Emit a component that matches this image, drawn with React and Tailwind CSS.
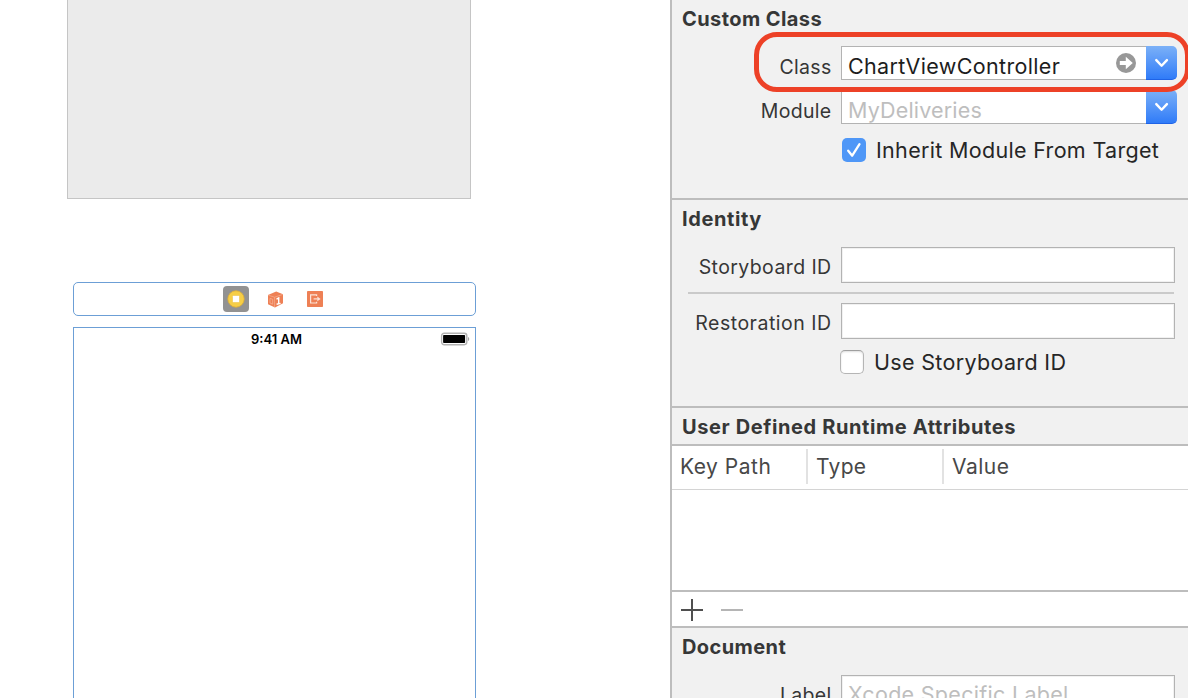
import React from "react";

function Heading({ children, className = "tracking-[0.42px]" }) {
  return (
    <h2 className={`h-[36px] whitespace-nowrap pl-[10px] text-[20px] font-bold leading-[38px] text-[#363737] ${className}`}>
      {children}
    </h2>
  );
}

function Label({ children, className = "" }) {
  return (
    <span className={`w-[159.5px] shrink-0 whitespace-nowrap text-right text-[19.5px] text-[#363636] ${className}`}>
      {children}
    </span>
  );
}

function ComboButton() {
  return (
    <div className="flex h-[34px] w-[31px] shrink-0 items-center justify-center rounded-r-[5px] border-b border-[#1f63e6] bg-gradient-to-b from-[#7bb0f7] to-[#2f7bf8]">
      <svg width="14" height="10" viewBox="0 0 14 10" fill="none" stroke="#fff" strokeWidth="2.4" strokeLinecap="round" strokeLinejoin="round">
        <path d="M1.3 2.1 6.6 7.7l5.3-5.6" />
      </svg>
    </div>
  );
}

function TextField() {
  return <div className="ml-[9.5px] h-[36px] w-[334px] border border-[#b3b3b3] bg-white shadow-[inset_0_0_0_1px_#f1f1f1]" />;
}

function Canvas() {
  return (
    <div className="flex w-[670px] shrink-0 flex-col">
      <div className="ml-[67px] h-[198.5px] w-[404px] border border-t-0 border-[#c5c5c5] bg-[#ebebeb]" />
      <div className="ml-[73px] mt-[83.5px] flex h-[34px] w-[403px] items-center rounded-[5px] border border-[#6c9fd6] pl-[149px]">
        <div className="flex h-[26px] w-[26px] items-center justify-center rounded-[4px] bg-[#929292]">
          <svg width="18" height="18" viewBox="0 0 18 18">
            <circle cx="9" cy="9" r="8.2" fill="#f6ce46" stroke="#dfae35" strokeWidth="0.8" />
            <rect x="5.5" y="5.5" width="7" height="7" rx="0.8" fill="#fff" stroke="#e9bd3c" strokeWidth="0.5" />
          </svg>
        </div>
        <svg className="ml-[18px]" width="17" height="17" viewBox="0 0 17 17">
          <path d="M9.2 0.4 16 3.2v9L8 16.6 1 13.2V4Z" fill="#ee8055" />
          <path d="M1.2 4.2 7.6 6.2 15.8 3.4M7.6 6.2v10" fill="none" stroke="#f6b093" strokeWidth="0.7" />
          <path d="M3 12V7.4l2.7 0.9v4.9Z" fill="none" stroke="#f6b093" strokeWidth="0.8" />
          <path d="m9.5 8.1 2.2-1.1v6M9.6 13.2l4-.8" fill="none" stroke="#fff" strokeWidth="1.4" />
        </svg>
        <svg className="ml-[23px]" width="16" height="16" viewBox="0 0 16 16">
          <rect width="16" height="16" rx="0.8" fill="#ee8055" />
          <path d="M9.6 5V3.8H3.6v8.2h6v-1.3" fill="none" stroke="#fce3d8" strokeWidth="1.2" />
          <path d="M6.6 7.9h4" stroke="#fce3d8" strokeWidth="1.2" />
          <path d="m10.3 5.5 3.3 2.4-3.3 2.4Z" fill="#fce3d8" />
        </svg>
      </div>
      <div className="ml-[73px] mt-[11px] flex h-[371px] w-[403px] items-start border border-b-0 border-[#6c9fd6]">
        <span className="ml-[177px] mt-[3px] w-[189px] whitespace-nowrap text-[13px] font-semibold leading-[17px] text-black">9:41 AM</span>
        <svg className="mt-[4px]" width="30" height="14" viewBox="0 0 30 14">
          <rect x="1.6" y="1.3" width="25.2" height="11.4" rx="2.6" fill="#fff" stroke="#b2b2b2" strokeWidth="1.4" />
          <rect x="3.1" y="3" width="22" height="8.1" rx="0.8" fill="#000" />
          <path d="M28 5c1.7.7 1.7 3.3 0 4Z" fill="#a5a5a5" />
        </svg>
      </div>
    </div>
  );
}

function Inspector() {
  return (
    <div className="flex w-[518px] shrink-0 flex-col border-l-2 border-[#bdbdbd] bg-[#f1f1f1]">
      <section className="h-[200px] border-b-2 border-[#bdbdbd]">
        <Heading>Custom Class</Heading>
        <div className="relative mt-[10px] flex h-[34px]">
          <Label className="leading-[42px] tracking-[0.3px]">Class</Label>
          <div className="ml-[9.5px] flex h-[34px] w-[305px] items-center border border-r-0 border-[#b3b3b3] bg-white pl-[6px]">
            <span className="w-[268px] whitespace-nowrap pt-[5px] text-[21.5px] leading-[34px] tracking-[0.35px] text-[#1d1d1d]">ChartViewController</span>
            <svg className="shrink-0" width="20" height="20" viewBox="0 0 20 20">
              <circle cx="10" cy="10" r="10" fill="#989898" />
              <path d="M3.8 8h6V3.7l7 6.3-7 6.3V12h-6Z" fill="#fff" />
            </svg>
          </div>
          <ComboButton />
          <div className="absolute left-[82.4px] top-[-14px] z-10 h-[60px] w-[436px] rounded-[23px] border-[5px] border-[#ed4127]" />
        </div>
        <div className="mt-[10px] flex h-[34px]">
          <Label className="leading-[42px] tracking-[0.3px]">Module</Label>
          <div className="ml-[9.5px] flex h-[34px] w-[305px] border border-[#b3b3b3] border-r-0 bg-white pl-[6px]">
            <span className="whitespace-nowrap text-[21.5px] leading-[38px] tracking-[0.17px] text-[#bebebe]">MyDeliveries</span>
          </div>
          <ComboButton />
        </div>
        <div className="ml-[170px] mt-[14px] flex h-[24px] items-center">
          <div className="flex h-[24px] w-[24px] items-center justify-center rounded-[5px] bg-[#4f97f7]">
            <svg width="16" height="16" viewBox="0 0 16 16" fill="none" stroke="#fff" strokeWidth="2.3" strokeLinecap="round" strokeLinejoin="round">
              <path d="m2.2 8.7 4 5L13.5 2.2" />
            </svg>
          </div>
          <span className="ml-[10px] whitespace-nowrap text-[21.5px] leading-[24px] tracking-[0.32px] text-[#262626]">Inherit Module From Target</span>
        </div>
      </section>

      <section className="h-[208px] border-b-2 border-[#bdbdbd]">
        <Heading className="tracking-[0.6px]">Identity</Heading>
        <div className="mt-[11px] flex h-[36px]">
          <Label className="leading-[40px] tracking-[0.4px]">Storyboard ID</Label>
          <TextField />
        </div>
        <div className="ml-[16px] mt-[9px] h-[2px] w-[486px] bg-[#cacaca]" />
        <div className="mt-[9px] flex h-[36px]">
          <Label className="leading-[40px] tracking-[0.5px]">Restoration ID</Label>
          <TextField />
        </div>
        <div className="ml-[168px] mt-[11px] flex h-[24px] items-center">
          <div className="h-[24px] w-[24px] rounded-[5px] border border-[#b5b5b5] border-t-[#9f9f9f] bg-white shadow-[inset_0_1px_2px_#ddd]" />
          <span className="ml-[10px] whitespace-nowrap text-[21.5px] leading-[24px] tracking-[0.33px] text-[#262626]">Use Storyboard ID</span>
        </div>
      </section>

      <section className="h-[220px] bg-white">
        <Heading className="bg-[#f1f1f1] tracking-[0.61px]">User Defined Runtime Attributes</Heading>
        <div className="flex h-[46px] items-start border-b border-t-2 border-b-[#d4d4d4] border-t-[#bdbdbd] text-[21px] leading-[41px] tracking-[0.5px] text-[#484848]">
          <span className="w-[134px] pl-[8px]">Key Path</span>
          <div className="mt-[3px] h-[35px] w-[2px] bg-[#e2e2e2]" />
          <span className="w-[134px] pl-[8px] tracking-[0.3px]">Type</span>
          <div className="mt-[3px] h-[35px] w-[2px] bg-[#e2e2e2]" />
          <span className="pl-[8px]">Value</span>
        </div>
        <div className="h-[100px]" />
        <div className="flex h-[38px] items-center gap-[18px] border-y-2 border-[#bdbdbd] pl-[9px] pt-[2px]">
          <svg width="22" height="22" viewBox="0 0 22 22">
            <path d="M0 11h22M11 0v22" stroke="#4f4f4f" strokeWidth="2" />
          </svg>
          <svg width="22" height="22" viewBox="0 0 22 22">
            <path d="M0 11h22" stroke="#b5b5b5" strokeWidth="2" />
          </svg>
        </div>
      </section>

      <section className="h-[70px] overflow-hidden">
        <Heading>Document</Heading>
        <div className="mt-[11px] flex h-[36px]">
          <Label className="leading-[40px] tracking-[0.3px]">Label</Label>
          <div className="ml-[9.5px] h-[36px] w-[334px] border border-[#b3b3b3] bg-white pl-[6px] shadow-[inset_0_0_0_1px_#f1f1f1]">
            <span className="whitespace-nowrap text-[21.5px] leading-[36px] tracking-[0.3px] text-[#bebebe]">Xcode Specific Label</span>
          </div>
        </div>
      </section>
    </div>
  );
}

export default function App() {
  return (
    <main className="flex h-[698px] w-[1188px] overflow-hidden bg-white font-['Inter',sans-serif]">
      <Canvas />
      <Inspector />
    </main>
  );
}
